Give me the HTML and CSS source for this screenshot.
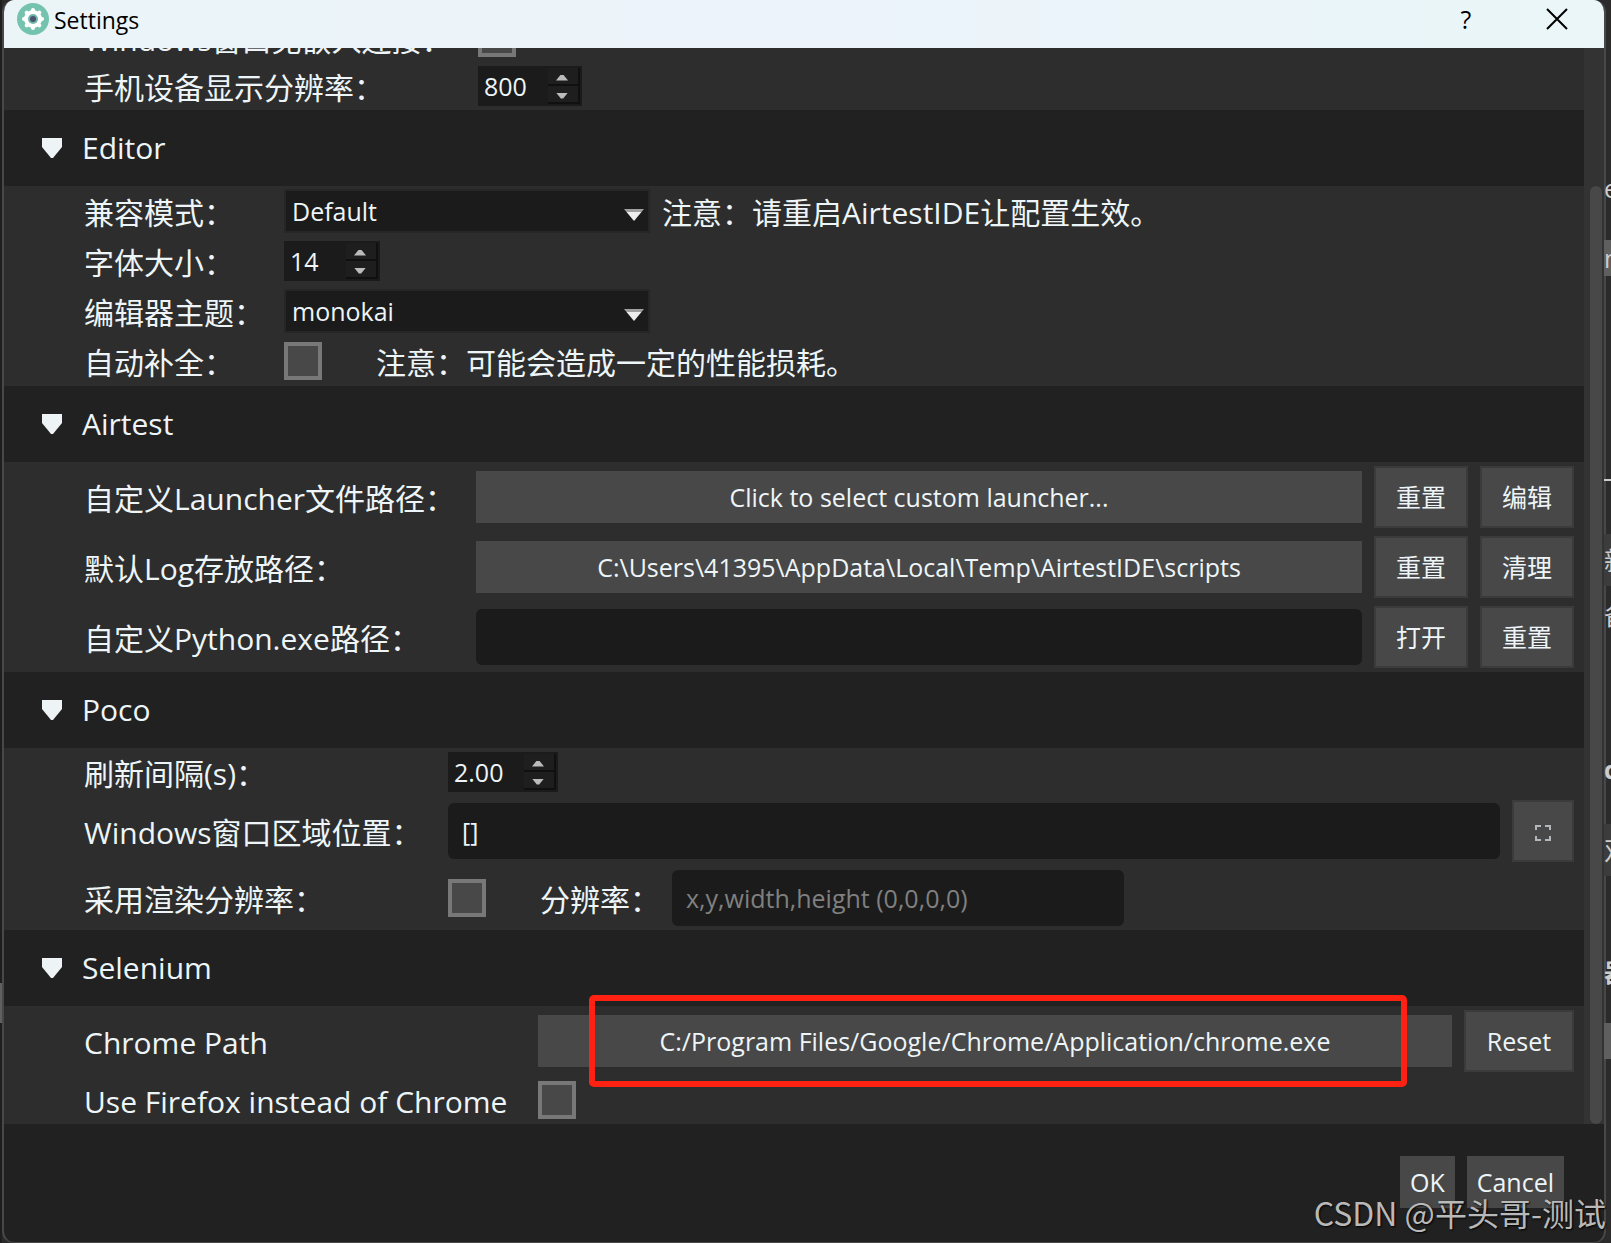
FILE: index.html
```html
<!DOCTYPE html>
<html lang="zh-CN">
<head>
	<meta charset="UTF-8">
	<title>Settings</title>
	<link rel="stylesheet" href="styles.css">
</head>
<body>
	<div class="desk-left"><i></i></div>
	<div class="window">
		<div class="titlebar">
			<svg class="logo" width="32" height="32" viewBox="0 0 32 32">
				<circle cx="16" cy="16" r="16" fill="#74c3ae"/>
				<g fill="#fff">
					<circle cx="16" cy="16" r="9"/>
					<rect x="14" y="5" width="4" height="22" rx="2"/>
					<rect x="14" y="5" width="4" height="22" rx="2" transform="rotate(45 16 16)"/>
					<rect x="14" y="5" width="4" height="22" rx="2" transform="rotate(90 16 16)"/>
					<rect x="14" y="5" width="4" height="22" rx="2" transform="rotate(135 16 16)"/>
				</g>
				<circle cx="16" cy="16" r="5" fill="#6fb5a8"/>
				<circle cx="16" cy="16" r="3" fill="#4a5470"/>
			</svg>
			<span class="title">Settings</span>
			<button class="tb-btn">?</button>
			<button class="tb-btn" aria-label="Close">
				<svg width="22" height="22" viewBox="0 0 22 22" stroke="#000" stroke-width="2" fill="none"><path d="M1 1L21 21M21 1L1 21"/></svg>
			</button>
		</div>

		<div class="main">
			<div class="content">
				<div class="group device">
					<div class="row">
						<label for="embed">Windows窗口免嵌入连接：</label>
						<input type="checkbox" id="embed">
					</div>
					<div class="row">
						<label for="phone-res">手机设备显示分辨率：</label>
						<div class="spin w104">
							<input type="number" id="phone-res" value="800">
							<div class="steps"><button class="up" aria-label="+"></button><button class="down" aria-label="-"></button></div>
						</div>
					</div>
				</div>

				<h2><svg width="20" height="20" viewBox="0 0 20 20"><path d="M0 0H20V9L11 20H9L0 9Z" fill="#eef3f6"/></svg>Editor</h2>
				<div class="group editor">
					<div class="row">
						<label for="mode">兼容模式：</label>
						<div class="select"><select id="mode"><option>Default</option></select></div>
						<span>注意：请重启AirtestIDE让配置生效。</span>
					</div>
					<div class="row">
						<label for="font-size">字体大小：</label>
						<div class="spin w96">
							<input type="number" id="font-size" value="14">
							<div class="steps"><button class="up" aria-label="+"></button><button class="down" aria-label="-"></button></div>
						</div>
					</div>
					<div class="row">
						<label for="theme">编辑器主题：</label>
						<div class="select"><select id="theme"><option>monokai</option></select></div>
					</div>
					<div class="row">
						<label for="auto">自动补全：</label>
						<input type="checkbox" id="auto">
						<span class="tip">注意：可能会造成一定的性能损耗。</span>
					</div>
				</div>

				<h2><svg width="20" height="20" viewBox="0 0 20 20"><path d="M0 0H20V9L11 20H9L0 9Z" fill="#eef3f6"/></svg>Airtest</h2>
				<div class="group airtest">
					<div class="row tall">
						<label for="launcher">自定义Launcher文件路径：</label>
						<button class="path" id="launcher">Click to select custom launcher...</button>
						<button class="btn">重置</button>
						<button class="btn">编辑</button>
					</div>
					<div class="row tall">
						<label for="log">默认Log存放路径：</label>
						<button class="path" id="log">C:\Users\41395\AppData\Local\Temp\AirtestIDE\scripts</button>
						<button class="btn">重置</button>
						<button class="btn">清理</button>
					</div>
					<div class="row tall">
						<label for="python">自定义Python.exe路径：</label>
						<input type="text" id="python">
						<button class="btn">打开</button>
						<button class="btn">重置</button>
					</div>
				</div>

				<h2><svg width="20" height="20" viewBox="0 0 20 20"><path d="M0 0H20V9L11 20H9L0 9Z" fill="#eef3f6"/></svg>Poco</h2>
				<div class="group poco">
					<div class="row">
						<label for="interval">刷新间隔(s)：</label>
						<div class="spin w110">
							<input type="text" id="interval" value="2.00">
							<div class="steps"><button class="up" aria-label="+"></button><button class="down" aria-label="-"></button></div>
						</div>
					</div>
					<div class="row tall">
						<label for="area">Windows窗口区域位置：</label>
						<input type="text" id="area" value="[]">
						<button class="btn square" aria-label="Select area">
							<svg width="16" height="16" viewBox="0 0 16 16" stroke="#b4b8ba" stroke-width="2" fill="none"><path d="M1 5V1H6M10 1H15V5M15 11V15H10M6 15H1V11"/></svg>
						</button>
					</div>
					<div class="row mid">
						<label for="render">采用渲染分辨率：</label>
						<input type="checkbox" id="render">
						<label class="res-label" for="res">分辨率：</label>
						<input type="text" class="res" id="res" placeholder="x,y,width,height (0,0,0,0)">
					</div>
				</div>

				<h2><svg width="20" height="20" viewBox="0 0 20 20"><path d="M0 0H20V9L11 20H9L0 9Z" fill="#eef3f6"/></svg>Selenium</h2>
				<div class="group selenium">
					<div class="row tall">
						<label for="chrome">Chrome Path</label>
						<div class="path-wrap">
							<button class="path" id="chrome">C:/Program Files/Google/Chrome/Application/chrome.exe</button>
							<div class="mark"></div>
						</div>
						<button class="btn reset">Reset</button>
					</div>
					<div class="row">
						<label for="firefox">Use Firefox instead of Chrome</label>
						<input type="checkbox" id="firefox">
					</div>
				</div>
			</div>
			<div class="scrollbar"><div class="thumb"></div></div>
		</div>

		<div class="footer">
			<button>OK</button>
			<button>Cancel</button>
		</div>
	</div>

	<!-- sliver of the IDE behind the dialog -->
	<div class="desk-right">
		<span class="f1">e</span>
		<span class="f2 block">m</span>
		<span class="f3"></span>
		<span class="f4 block dim">新</span>
		<span class="f5">备</span>
		<span class="f6">d</span>
		<span class="f7 block dim">双</span>
		<span class="f8">器</span>
		<span class="f9 block"></span>
	</div>
	<div class="watermark">CSDN @平头哥-测试</div>
</body>
</html>
```

FILE: styles.css
```css
*{
	margin: 0;
	padding: 0;
	box-sizing: border-box;
}
body{
	position: relative;
	display: flex;
	height: 100vh;
	overflow: hidden;
	background: #2b2b2b;
	color: #eef5f8;
	font: 30px/40px "Open Sans","Noto Sans CJK SC",sans-serif;
}
button,input,select{
	border: none;
	outline: none;
	color: inherit;
	font: 25px/32px "Open Sans","Noto Sans CJK SC",sans-serif;
}
label,span{
	white-space: nowrap;
}

/* window */
.window{
	flex: 1;
	min-width: 0;
	display: flex;
	flex-direction: column;
	overflow: hidden;
	border: 2px solid #484848;
	border-top: none;
	border-bottom-width: 1px;
	border-radius: 12px;
	background: #212121;
}
.titlebar{
	display: flex;
	align-items: center;
	height: 48px;
	padding: 0 12px 10px 13px;
	background: linear-gradient(90deg, #ebf5f8, #ecf3fb 50%, #eaf6f8);
	color: #000;
}
.title{
	flex: 1;
	padding: 2px 0 0 5px;
	font-size: 23px;
	line-height: 32px;
}
.tb-btn{
	width: 70px;
	height: 38px;
	margin-left: 21px;
	background: none;
	color: #000;
	font-size: 25px;
}
.tb-btn svg{
	display: block;
	margin: auto;
}
.main{
	flex: 1;
	min-height: 0;
	display: flex;
	background: #2d2d2d;
}
.content{
	flex: 1;
	min-width: 0;
	display: flex;
	flex-direction: column;
	justify-content: flex-end;
	overflow: hidden;
}
.scrollbar{
	width: 20px;
	padding: 138px 2px 0 6px;
	background: #333;
}
.thumb{
	height: 100%;
	border-radius: 6px;
	background: #484848;
}

/* groups */
h2{
	flex: none;
	display: flex;
	align-items: center;
	gap: 20px;
	height: 76px;
	padding-left: 38px;
	background: #212121;
	font-size: 30px;
	font-weight: normal;
}
.group{
	flex: none;
	padding: 0 10px 0 80px;
}
.row{
	display: flex;
	align-items: center;
	gap: 12px;
	height: 48px;
}
.tall{
	height: 70px;
}
.mid{
	height: 64px;
}
.editor .row{
	height: 50px;
}
.row label,.row span{
	flex: none;
	padding-top: 3px;
}
.device label{
	width: 382px;
}
.editor label{
	width: 188px;
}
.airtest label{
	width: 380px;
}
.poco label{
	width: 352px;
}
.selenium label{
	width: 442px;
}
.poco .res-label{
	width: 120px;
	margin-left: 42px;
}
.tip{
	margin-left: 42px;
}

/* controls */
input[type=checkbox]{
	appearance: none;
	flex: none;
	width: 38px;
	height: 38px;
	border: 4px solid #787878;
	background: #484848;
}
input[type=text]{
	flex: 1;
	min-width: 0;
	height: 56px;
	padding: 0 14px;
	border-radius: 6px;
	background: #1b1b1b;
}
input.res{
	flex: none;
	width: 452px;
}
input::placeholder{
	color: #808080;
	opacity: 1;
}
.select{
	position: relative;
	width: 366px;
}
.select select{
	appearance: none;
	display: block;
	width: 100%;
	height: 44px;
	padding-left: 6px;
	border: 2px solid #262626;
	background: #1b1b1b;
}
.select::after{
	content: "";
	position: absolute;
	right: 6px;
	top: 20px;
	width: 20px;
	height: 12px;
	background: linear-gradient(#a0a0a0 3px, #eee 3px);
	clip-path: polygon(0 0, 100% 0, 50% 100%);
	pointer-events: none;
}
.spin{
	display: flex;
	height: 40px;
	padding: 2px;
	background: #1b1b1b;
}
.w96{
	width: 96px;
}
.w104{
	width: 104px;
}
.w110{
	width: 110px;
}
.spin input,.spin input[type=text]{
	appearance: textfield;
	flex: 1;
	min-width: 0;
	height: 36px;
	padding: 0 0 0 4px;
	border-radius: 0;
	background: none;
}
.spin input::-webkit-inner-spin-button{
	display: none;
}
.steps{
	width: 32px;
}
.steps button{
	display: block;
	width: 32px;
	height: 18px;
	padding: 3px 2px 0 0;
	border-right: 2px solid #101010;
	border-bottom: 2px solid #101010;
	background: #1e1e1e;
}
.steps button::after{
	content: "";
	display: block;
	width: 12px;
	height: 6px;
	margin: 0 auto;
	background: #bbb;
	clip-path: polygon(40% 0, 60% 0, 100% 100%, 0 100%);
}
.steps .down::after{
	clip-path: polygon(0 0, 100% 0, 60% 100%, 40% 100%);
}
.path{
	flex: 1;
	min-width: 0;
	height: 52px;
	background: #484848;
}
.path-wrap{
	position: relative;
	flex: 1;
	display: flex;
}
.mark{
	position: absolute;
	left: 51px;
	right: 45px;
	top: -20px;
	bottom: -20px;
	border: 6px solid #ff2213;
	border-radius: 5px;
	pointer-events: none;
}
.btn{
	flex: none;
	width: 94px;
	height: 62px;
	border: 2px solid #3b3b3b;
	background: #484848;
}
.square{
	width: 62px;
	line-height: 24px;
}
.reset{
	width: 110px;
}
.footer{
	display: flex;
	justify-content: flex-end;
	align-items: flex-start;
	gap: 12px;
	height: 118px;
	padding: 32px 40px 0 0;
}
.footer button{
	height: 52px;
	padding: 0 10px;
	background: #484848;
}

/* behind the window */
.desk-left{
	width: 2px;
	padding-top: 983px;
	background: #1e1e1e;
}
.desk-left i{
	display: block;
	height: 40px;
	background: #606060;
}
.desk-right{
	position: relative;
	width: 5px;
}
.desk-right span{
	position: absolute;
	left: -2px;
	width: 7px;
	height: 36px;
	overflow: hidden;
	color: #ccc;
	font-size: 25px;
	line-height: 36px;
}
.desk-right .block{
	background: #5f5f5f;
}
.desk-right .dim{
	height: 52px;
	background: #3c3c3c;
	line-height: 52px;
}
.desk-right .f1{
	top: 170px;
}
.desk-right .f2{
	top: 240px;
}
.desk-right .f3{
	top: 479px;
	height: 2px;
	background: #ccc;
}
.desk-right .f4{
	top: 534px;
}
.desk-right .f5{
	top: 597px;
}
.desk-right .f6{
	top: 751px;
	font-weight: bold;
}
.desk-right .f7{
	top: 824px;
}
.desk-right .f8{
	top: 954px;
	font-weight: bold;
}
.desk-right .f9{
	top: 1023px;
}
.watermark{
	position: absolute;
	right: 5px;
	bottom: 11px;
	color: #b9b9b9;
	font-family: "Noto Sans CJK SC",sans-serif;
	font-size: 32px;
	text-shadow: 1px 1px 2px #000;
}
```
